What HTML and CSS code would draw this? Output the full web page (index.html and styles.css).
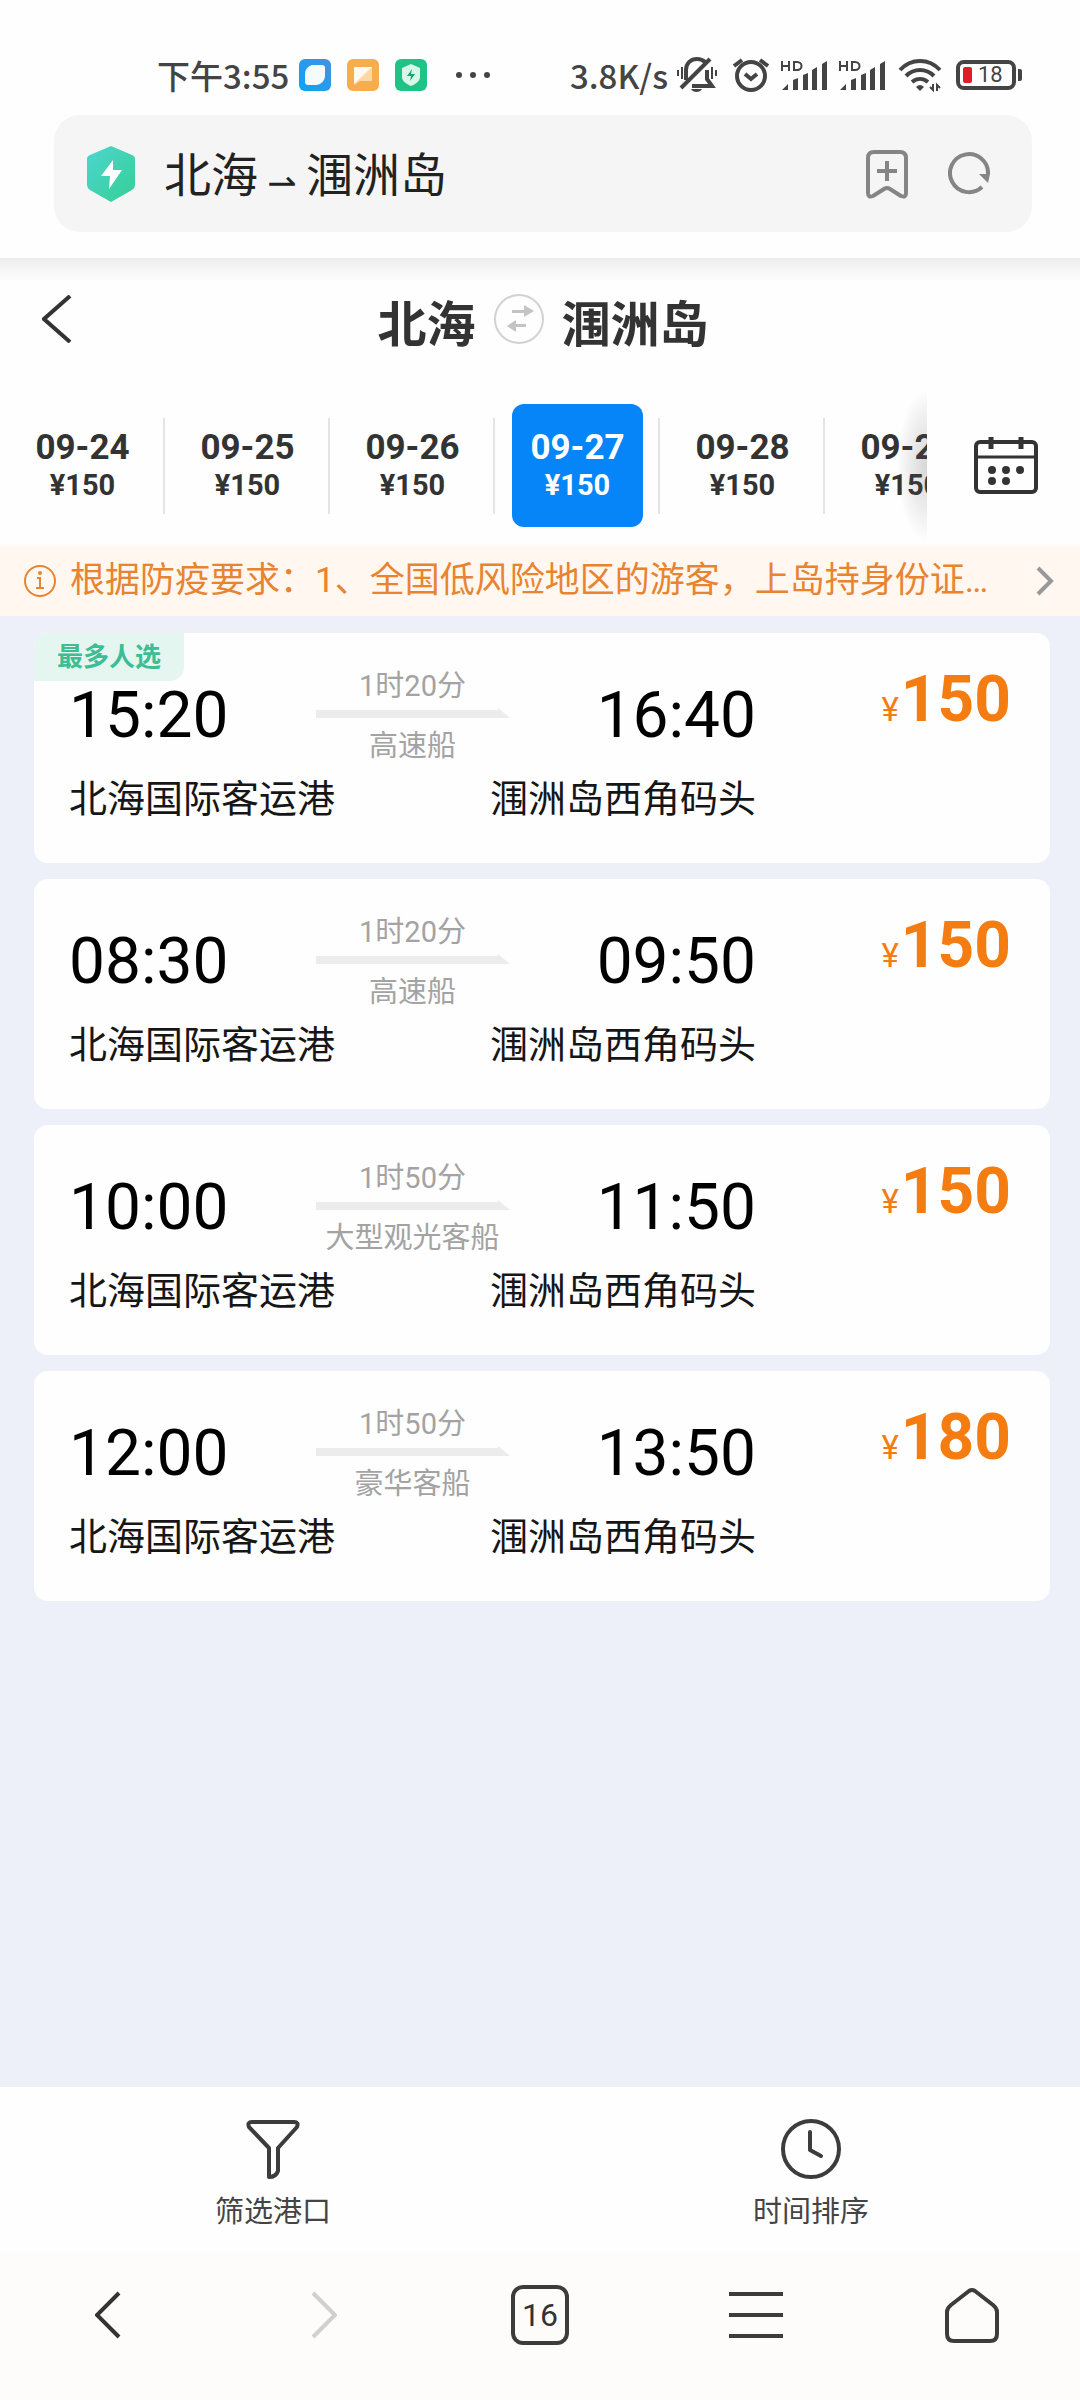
FILE: index.html
```html
<!DOCTYPE html>
<html lang="zh-CN">
<head>
<meta charset="utf-8">
<meta name="viewport" content="width=device-width, initial-scale=1">
<title>北海→涠洲岛</title>
<link rel="stylesheet" href="styles.css">
</head>
<body>
<div class="status-bar">
  <div class="status-left">
    <span class="status-text">下午3:55</span>
    <div class="status-apps">
      <svg width="32" height="32" viewBox="0 0 32 32"><defs><linearGradient id="blue" x1="0" y1="1" x2="1" y2="0"><stop offset="0" stop-color="#08a5f5"/><stop offset="1" stop-color="#4590e0"/></linearGradient></defs><rect width="32" height="32" rx="6" fill="url(#blue)"/><path d="M13 6h10a3 3 0 0 1 3 3v8a9 9 0 0 1-9 9H9a3 3 0 0 1-3-3v-8a9 9 0 0 1 7-9z" fill="#f4faff"/></svg>
      <svg width="32" height="32" viewBox="0 0 32 32"><rect width="32" height="32" rx="6" fill="#f6ae4c"/><path d="M7 8h18v14H13l-6 4z" fill="#fbd9a6"/><path d="M7 8h18L7 25z" fill="#fff9f0"/></svg>
      <svg width="32" height="32" viewBox="0 0 32 32"><rect width="32" height="32" rx="6" fill="#1dc486"/><path d="M16 5l9 4v9c0 4-4 7-9 9-5-2-9-5-9-9V9z" fill="#d8f8ea"/><path d="M17 10l-5 7h4l-1 5 5-7h-4z" fill="#14ab76"/></svg>
    </div>
    <svg class="status-dots" width="36" height="8" viewBox="0 0 36 8" fill="#444"><circle cx="4" cy="4" r="3"/><circle cx="18" cy="4" r="3"/><circle cx="32" cy="4" r="3"/></svg>
  </div>
  <div class="status-right">
    <span class="status-text">3.8K/s</span>
    <svg class="bell" width="42" height="36" viewBox="0 0 42 36" fill="none" stroke="#444" stroke-width="4"><path d="M34 2L5 31M10 23V13c0-7 5-11 11-11 4 0 6 1 8 3M31 13v9l5 7H16"/><path d="M2 13v6M6 10v12M36 10v12M40 13v6" stroke-width="2"/><path d="M15 32h11c-2 4-9 4-11 0z" fill="#444" stroke="none"/></svg>
    <svg class="alarm" width="38" height="34" viewBox="0 0 38 34" fill="none" stroke="#444" stroke-width="4"><circle cx="19" cy="18" r="14"/><path d="M2 8l8-6M28 2l8 6"/><path d="M13 16l6 5 6-5"/></svg>
    <svg class="signal" width="48" height="34" viewBox="0 0 48 34"><g fill="none" stroke="#444" stroke-width="2"><path d="M2 3v10M2 8h7M9 3v10M14 4h3c6 0 6 8 0 8h-3z"/></g><path d="M2 32l6-6v6zM13 22l5-2v12h-5zM23 17l5-2v17h-5zM32 12l5-3v23h-5zM42 6l5-3v29h-5z" fill="#444"/></svg>
    <svg class="signal" width="48" height="34" viewBox="0 0 48 34"><g fill="none" stroke="#444" stroke-width="2"><path d="M2 3v10M2 8h7M9 3v10M14 4h3c6 0 6 8 0 8h-3z"/></g><path d="M2 32l6-6v6zM13 22l5-2v12h-5zM23 17l5-2v17h-5zM32 12l5-3v23h-5zM42 6l5-3v29h-5z" fill="#444"/></svg>
    <svg class="wifi" width="44" height="34" viewBox="0 0 44 34" fill="none" stroke="#444" stroke-width="4"><path d="M2 12c11-12 29-12 40 0M8 18c8-8 20-8 28 0M14 24c5-4 11-4 16 0"/><path d="M18 29q4-4 8 0l-4 4z" fill="#444" stroke="none"/><path d="M35 26v6l-3-3M39 33v-6l3 3" stroke-width="2"/></svg>
    <div class="battery" role="img" aria-label="电量 18%"><span class="battery-level"></span><span class="battery-value">18</span></div>
  </div>
</div>

<div class="address-bar">
  <svg class="shield" width="50" height="58" viewBox="0 0 50 58"><defs><linearGradient id="green" x1="0" y1="0" x2="1" y2="1"><stop offset="0" stop-color="#4dd5cf"/><stop offset="1" stop-color="#36cf95"/></linearGradient></defs><path d="M25 1l21 9q3 1 3 4v26q0 3-3 5L25 57 4 45q-3-2-3-5V14q0-3 3-4z" fill="url(#green)"/><path d="M27 15L15 31h9l-1 13 13-19h-9z" fill="#fff"/></svg>
  <span class="address-text">北海<span class="address-arrow">⇀</span>涠洲岛</span>
  <button class="icon-button" type="button" aria-label="添加书签"><svg width="42" height="50" viewBox="0 0 42 50" fill="none" stroke="#858585" stroke-width="4" stroke-linejoin="round"><path d="M8 3h26q6 0 6 6v35q0 5-5 3l-11-7q-3-2-6 0L7 47q-5 2-5-3V9q0-6 6-6z"/><path d="M21 12v20M11 22h20"/></svg></button>
  <button class="icon-button" type="button" aria-label="刷新"><svg width="42" height="44" viewBox="0 0 42 44"><path d="M34 35A19 19 0 1 1 40 22" fill="none" stroke="#858585" stroke-width="4"/><path d="M31 22h11l-2 9z" fill="#858585"/></svg></button>
</div>

<header class="route-header">
  <button class="icon-button back" type="button" aria-label="返回"><svg width="30" height="48" viewBox="0 0 30 48" fill="none" stroke="#333" stroke-width="4"><path d="M28 1L2 24l26 23"/></svg></button>
  <h1 class="route">
    <span>北海</span>
    <button class="icon-button swap" type="button" aria-label="交换"><svg width="50" height="50" viewBox="0 0 50 50"><circle cx="25" cy="25" r="24" fill="none" stroke="#d2d2d2" stroke-width="2"/><path d="M18 16h12v-5l10 6-10 6v-4H18zM32 30H22v-4l-9 6 9 6v-5h10z" fill="#c4c4c4"/></svg></button>
    <span>涠洲岛</span>
  </h1>
</header>

<nav class="date-bar" aria-label="日期">
  <ul class="dates">
    <li><button type="button"><span class="day">09-24</span><span class="fare">¥150</span></button></li>
    <li><button type="button"><span class="day">09-25</span><span class="fare">¥150</span></button></li>
    <li><button type="button"><span class="day">09-26</span><span class="fare">¥150</span></button></li>
    <li><button type="button" class="active" aria-current="date"><span class="day">09-27</span><span class="fare">¥150</span></button></li>
    <li><button type="button"><span class="day">09-28</span><span class="fare">¥150</span></button></li>
    <li><button type="button"><span class="day">09-29</span><span class="fare">¥150</span></button></li>
  </ul>
  <button class="icon-button calendar" type="button" aria-label="日历"><svg width="66" height="58" viewBox="0 0 66 58" fill="none" stroke="#333" stroke-width="4"><rect x="3" y="5" width="60" height="50" rx="4"/><path d="M3 20h60" stroke-width="3"/><path d="M18 0v12M48 0v12" stroke-width="5"/><g fill="#333" stroke="none"><circle cx="19" cy="33" r="4"/><circle cx="33" cy="33" r="4"/><circle cx="47" cy="33" r="4"/><circle cx="19" cy="44" r="4"/><circle cx="33" cy="44" r="4"/></g></svg></button>
</nav>

<a class="notice" href="#notice">
  <svg width="32" height="32" viewBox="0 0 32 32" fill="none" stroke="#e88430" stroke-width="2"><circle cx="16" cy="16" r="15"/><path d="M13 13h3v10M12 23h8"/><circle cx="16" cy="8" r="1"/></svg>
  <span class="notice-text">根据防疫要求：1、全国低风险地区的游客，上岛持身份证…</span>
  <svg width="18" height="30" viewBox="0 0 18 30" fill="none" stroke="#999" stroke-width="4"><path d="M2 2l13 13L2 28"/></svg>
</a>

<main class="trips">
  <a class="card" href="#trip1">
    <span class="badge">最多人选</span>
    <div class="trip">
      <div class="times">
        <span class="time">15:20</span>
        <div class="leg"><span>1时20分</span><svg class="leg-arrow" width="194" height="10" viewBox="0 0 194 10"><path d="M0 2h182V0l12 10H0z" fill="#ececec"/></svg><span>高速船</span></div>
        <span class="time end">16:40</span>
      </div>
      <div class="ports"><span>北海国际客运港</span><span>涠洲岛西角码头</span></div>
    </div>
    <div class="price"><span class="currency">¥</span>150</div>
  </a>
  <a class="card" href="#trip2">
    <div class="trip">
      <div class="times">
        <span class="time">08:30</span>
        <div class="leg"><span>1时20分</span><svg class="leg-arrow" width="194" height="10" viewBox="0 0 194 10"><path d="M0 2h182V0l12 10H0z" fill="#ececec"/></svg><span>高速船</span></div>
        <span class="time end">09:50</span>
      </div>
      <div class="ports"><span>北海国际客运港</span><span>涠洲岛西角码头</span></div>
    </div>
    <div class="price"><span class="currency">¥</span>150</div>
  </a>
  <a class="card" href="#trip3">
    <div class="trip">
      <div class="times">
        <span class="time">10:00</span>
        <div class="leg"><span>1时50分</span><svg class="leg-arrow" width="194" height="10" viewBox="0 0 194 10"><path d="M0 2h182V0l12 10H0z" fill="#ececec"/></svg><span>大型观光客船</span></div>
        <span class="time end">11:50</span>
      </div>
      <div class="ports"><span>北海国际客运港</span><span>涠洲岛西角码头</span></div>
    </div>
    <div class="price"><span class="currency">¥</span>150</div>
  </a>
  <a class="card" href="#trip4">
    <div class="trip">
      <div class="times">
        <span class="time">12:00</span>
        <div class="leg"><span>1时50分</span><svg class="leg-arrow" width="194" height="10" viewBox="0 0 194 10"><path d="M0 2h182V0l12 10H0z" fill="#ececec"/></svg><span>豪华客船</span></div>
        <span class="time end">13:50</span>
      </div>
      <div class="ports"><span>北海国际客运港</span><span>涠洲岛西角码头</span></div>
    </div>
    <div class="price"><span class="currency">¥</span>180</div>
  </a>
</main>

<div class="tools">
  <button type="button"><svg width="60" height="60" viewBox="0 0 60 60" fill="none" stroke="#3c3c3c" stroke-width="4" stroke-linejoin="round"><path d="M9 3h42q5 0 3 5L35 29v23q-2 6-9 6V29L6 8q-2-5 3-5z"/></svg><span>筛选港口</span></button>
  <button type="button"><svg width="60" height="60" viewBox="0 0 60 60" fill="none" stroke="#3c3c3c" stroke-width="4" stroke-linecap="round" stroke-linejoin="round"><circle cx="30" cy="30" r="28"/><path d="M29 13v18l11 6"/></svg><span>时间排序</span></button>
</div>

<nav class="browser-nav" aria-label="浏览器">
  <button type="button" aria-label="后退"><svg width="26" height="48" viewBox="0 0 26 48" fill="none" stroke="#333" stroke-width="4"><path d="M24 2L2 24l22 22"/></svg></button>
  <button type="button" aria-label="前进" disabled><svg width="26" height="48" viewBox="0 0 26 48" fill="none" stroke="#d0d0d0" stroke-width="4"><path d="M2 2l22 22L2 46"/></svg></button>
  <button type="button" aria-label="标签页"><span class="tab-count">16</span></button>
  <button type="button" aria-label="菜单"><svg width="54" height="48" viewBox="0 0 54 48" stroke="#3c3c3c" stroke-width="4"><path d="M0 3h54M0 24h54M0 45h54"/></svg></button>
  <button type="button" aria-label="主页"><svg width="54" height="56" viewBox="0 0 54 56" fill="none" stroke="#3c3c3c" stroke-width="4" stroke-linejoin="round"><path d="M24 4q3-2 6 0l18 14q4 3 4 7v22q0 7-7 7H9q-7 0-7-7V25q0-4 4-7z"/></svg></button>
</nav>
</body>
</html>
```
FILE: styles.css
```css
* {
  box-sizing: border-box;
}

body {
  margin: 0;
  min-height: 100vh;
  display: flex;
  flex-direction: column;
  background: #fefefe;
  color: #333;
  font-family: Roboto, "Noto Sans CJK SC", sans-serif;
}

button {
  margin: 0;
  padding: 0;
  border: 0;
  background: none;
  color: inherit;
  font: inherit;
}

a {
  color: inherit;
  text-decoration: none;
}

svg {
  display: block;
  flex: none;
}

.icon-button {
  flex: none;
}

/* Status bar */
.status-bar {
  display: flex;
  justify-content: space-between;
  padding: 53px 64px 18px 157px;
  color: #444;
}

.status-left,
.status-right {
  display: flex;
  align-items: center;
}

.status-text {
  font-family: "Noto Sans CJK SC", sans-serif;
  font-size: 33px;
  font-weight: 500;
  line-height: 44px;
}

.status-apps {
  display: flex;
  gap: 16px;
  margin-left: 10px;
}

.status-dots {
  margin-left: 28px;
}

.bell {
  margin-left: 8px;
}

.alarm {
  margin-left: 14px;
}

.signal {
  margin-left: 10px;
}

.wifi {
  margin-left: 12px;
}

.battery {
  position: relative;
  display: flex;
  align-items: center;
  gap: 6px;
  width: 60px;
  height: 30px;
  margin-left: 14px;
  padding-left: 3px;
  border: 4px solid #444;
  border-radius: 8px;
}

.battery::after {
  content: "";
  position: absolute;
  right: -10px;
  top: 5px;
  width: 4px;
  height: 12px;
  border-radius: 0 2px 2px 0;
  background: #444;
}

.battery-level {
  width: 9px;
  height: 16px;
  border-radius: 2px;
  background: #dc1f26;
}

.battery-value {
  font-size: 22px;
  line-height: 22px;
}

/* Address bar */
.address-bar {
  display: flex;
  align-items: center;
  gap: 40px;
  height: 117px;
  margin: 0 48px 26px 54px;
  padding: 0 42px 0 32px;
  border-radius: 26px;
  background: #f5f5f5;
}

.address-text {
  flex: 1;
  margin-left: -12px;
  padding-top: 4px;
  color: #222;
  font-size: 47px;
  line-height: 60px;
}

.address-arrow {
  display: inline-block;
  width: 48px;
  padding-top: 8px;
  font-family: "DejaVu Sans", sans-serif;
  font-size: 35px;
  line-height: 30px;
  text-align: center;
  vertical-align: middle;
}

/* Route header */
.route-header {
  display: grid;
  grid-template-columns: 1fr auto 1fr;
  align-items: center;
  height: 132px;
  padding: 0 42px;
  background: linear-gradient(#ececec, #f6f6f6 12px, #fefefe 24px);
}

.back {
  justify-self: start;
  padding-bottom: 10px;
}

.route {
  display: flex;
  align-items: center;
  gap: 18px;
  margin: 0;
  padding: 4px 0 0 6px;
  font-size: 49px;
  font-weight: 700;
  line-height: 60px;
}

.swap {
  padding-bottom: 14px;
}

/* Date selector */
.date-bar {
  display: flex;
  align-items: center;
  padding-bottom: 4px;
}

.dates {
  position: relative;
  display: flex;
  flex: 1;
  min-width: 0;
  margin: 0;
  padding: 14px 0;
  overflow: hidden;
  list-style: none;
}

.dates::after {
  content: "";
  position: absolute;
  top: 0;
  right: 0;
  bottom: 0;
  width: 30px;
  background: radial-gradient(ellipse 30px 76px at 100% 50%, rgba(90, 90, 90, 0.24), rgba(90, 90, 90, 0.1) 60%, rgba(90, 90, 90, 0));
}

.dates li {
  flex: none;
  width: 165px;
  padding: 0 17px;
  background: linear-gradient(#e4e4e4, #e4e4e4) right center / 2px 96px no-repeat;
}

.dates button {
  display: flex;
  flex-direction: column;
  align-items: center;
  width: 100%;
  padding: 25px 0 24px;
  border-radius: 12px;
  font-weight: 700;
}

.dates .active {
  background: #0585f7;
  color: #fff;
}

.day {
  font-size: 35px;
  line-height: 38px;
}

.fare {
  font-size: 29px;
  line-height: 36px;
}

.calendar {
  display: flex;
  justify-content: center;
  width: 153px;
  padding-left: 4px;
}

/* Notice */
.notice {
  display: flex;
  align-items: center;
  gap: 14px;
  padding: 11px 26px 10px 24px;
  background: #fff7f0;
  color: #e88430;
}

.notice-text {
  flex: 1;
  min-width: 0;
  overflow: hidden;
  font-size: 35px;
  line-height: 50px;
  white-space: nowrap;
}

/* Trip list */
.trips {
  display: flex;
  flex: 1;
  flex-direction: column;
  gap: 16px;
  padding: 17px 30px 16px 34px;
  background: #edf0f8;
}

.card {
  position: relative;
  display: flex;
  justify-content: space-between;
  align-items: flex-start;
  padding: 35px 39px 41px 35px;
  border-radius: 14px;
  background: #fefefe;
}

.badge {
  position: absolute;
  top: 0;
  left: 0;
  padding: 0 23px;
  border-radius: 14px 0 14px 0;
  background: #e5f6f0;
  color: #3dbd94;
  font-size: 26px;
  font-weight: 700;
  line-height: 48px;
}

.trip {
  display: flex;
  flex: 0 1 687px;
  flex-direction: column;
  gap: 12px;
}

.times {
  display: grid;
  grid-template-columns: 1fr auto 1fr;
  align-items: center;
}

.time {
  color: #000;
  font-size: 64px;
  line-height: 76px;
}

.end {
  text-align: right;
}

.leg {
  display: flex;
  flex-direction: column;
  align-items: center;
  color: #a3a3a3;
  font-size: 29px;
  line-height: 36px;
}

.leg-arrow {
  margin: 4px 0 10px;
}

.ports {
  display: flex;
  justify-content: space-between;
  color: #161616;
  font-size: 38px;
  line-height: 46px;
}

.price {
  padding-top: 3px;
  color: #f57c10;
  font-size: 64px;
  font-weight: 700;
  line-height: 58px;
}

.currency {
  margin-right: 2px;
  font-size: 33px;
  font-weight: 400;
}

/* Page tools */
.tools {
  display: grid;
  grid-template-columns: 1fr 1fr;
  padding: 32px 0 20px 4px;
  color: #444;
}

.tools button {
  display: flex;
  flex-direction: column;
  align-items: center;
  gap: 14px;
  font-size: 29px;
  line-height: 38px;
}

/* Browser navigation */
.browser-nav {
  display: grid;
  grid-template-columns: repeat(5, 1fr);
  height: 149px;
  padding: 0 0 21px;
  background: #fdfcfb;
}

.browser-nav button {
  display: flex;
  align-items: center;
  justify-content: center;
}

.tab-count {
  width: 58px;
  height: 60px;
  border: 4px solid #3c3c3c;
  border-radius: 12px;
  font-size: 32px;
  line-height: 52px;
  text-align: center;
}
```
